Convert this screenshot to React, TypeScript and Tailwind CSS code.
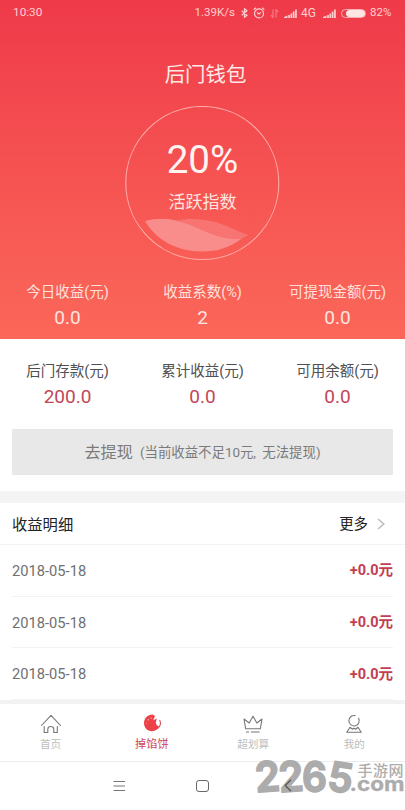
import React from "react";

type Stat = { label: string; value: string };

const earnings: Stat[] = [
  { label: "今日收益(元)", value: "0.0" },
  { label: "收益系数(%)", value: "2" },
  { label: "可提现金额(元)", value: "0.0" },
];
const balances: Stat[] = [
  { label: "后门存款(元)", value: "200.0" },
  { label: "累计收益(元)", value: "0.0" },
  { label: "可用余额(元)", value: "0.0" },
];
const records = [
  { date: "2018-05-18", amount: "+0.0元" },
  { date: "2018-05-18", amount: "+0.0元" },
  { date: "2018-05-18", amount: "+0.0元" },
];

function Signal() {
  return (
    <svg width="13" height="9" viewBox="0 0 13 9" fill="#ffd0d0">
      <path d="M0 9V8L3.5 6.5V9zM4.2 9V6h1.7v3zM6.5 9V4.5h1.7V9zM8.8 9V2.5h1.7V9zM11.1 9V.5h1.7V9z" />
    </svg>
  );
}

function StatusBar() {
  return (
    <div className="flex h-[26px] items-center pl-[13px] pr-[13px] text-[12px] text-[#ffd0d0]">
      <span className="text-[11.8px]">10:30</span>
      <span className="ml-auto w-[45px] text-[11.5px]">1.39K/s</span>
      <svg className="ml-px" width="7" height="10" viewBox="0 0 7 10" fill="none" stroke="#ffd0d0" strokeWidth="1.2">
        <path d="M.7 2.7 6 7.2 3.5 9.3V.7L6 2.8.7 7.3" />
      </svg>
      <svg className="ml-[5.5px]" width="12" height="12" viewBox="0 0 12 12" fill="none" stroke="#ffd0d0" strokeWidth="1.2">
        <circle cx="6" cy="6.4" r="4.5" />
        <path d="M4 5.5 6 7l2-1.6M.7 2.6 2.8.8M11.3 2.6 9.2.8" />
      </svg>
      <svg className="ml-[5px]" width="9" height="9" viewBox="0 0 9 9" fill="none" stroke="#f98088" strokeWidth="1.1">
        <path d="M3 .5v8L.8 6M6 8.5v-8L8.2 3" />
      </svg>
      <span className="ml-[5px]"><Signal /></span>
      <span className="ml-[4px] w-[17px]">4G</span>
      <span className="ml-[5px]"><Signal /></span>
      <span className="ml-[5px] flex h-[9px] w-[25px] justify-end rounded-full border border-[#ffb0b2]">
        <span className="h-full w-[19px] rounded-full bg-[#ffe5e3]" />
      </span>
      <span className="ml-[4px] w-[22px] whitespace-nowrap text-[11.5px]">82%</span>
    </div>
  );
}

function StatRow({ items, light }: { items: Stat[]; light?: boolean }) {
  return (
    <div className="grid grid-cols-3 text-center">
      {items.map((s) => (
        <div key={s.label} className="flex flex-col">
          <span className={`h-[22px] whitespace-nowrap text-[14.5px] leading-[22px] ${light ? "text-[#ffe0dc]" : "text-[#505050]"}`}>{s.label}</span>
          <span className={`mt-[2px] h-[24px] text-[19px] leading-[24px] ${light ? "text-[#ffe5e1]" : "text-[#c34658]"}`}>{s.value}</span>
        </div>
      ))}
    </div>
  );
}

function Gauge() {
  return (
    <div className="relative mx-auto mt-[17px] h-[155px] w-[155px]">
      <svg className="absolute inset-0" width="155" height="155" viewBox="0 0 155 155">
        <circle cx="77.3" cy="77" r="76.5" fill="none" stroke="#ffaaa6" strokeWidth="1.1" />
        <path d="M20 115C36 111 49 113 63 118C77 123 92 132 110 132.5L117 132.5C104 142 92 145.5 77 145.5C52 145.5 31 134 20 115Z" fill="#f88d8b" />
        <path d="M51 115C70 110 91 115 104 121C111 124 117 127 123.5 129L117 132.5C98 135 83 126 70 121C63 118 57 115.5 51 115Z" fill="#f87472" />
      </svg>
      <div className="relative flex flex-col items-center pt-[31px]">
        <span className="h-[46px] text-[38.6px] leading-[46px] text-[#fff4f1]">20%</span>
        <span className="mt-[7px] h-[24px] text-[17px] leading-[24px] text-[#ffe5e1]">活跃指数</span>
      </div>
    </div>
  );
}

const tabIcons: Record<string, React.ReactNode> = {
  首页: (
    <svg width="22" height="20" viewBox="0 0 22 20" fill="none" stroke="#777" strokeWidth="1.1" strokeLinecap="round" strokeLinejoin="round">
      <path d="M1.5 11.5 11 1.3l9.5 10.2M4.2 12.5v6h3.6v-3.3c0-3.7 6-3.7 6 0v3.3h3.5v-6" />
    </svg>
  ),
  掉馅饼: (
    <svg width="22" height="20" viewBox="0 0 22 20" fill="none">
      <path d="M11.5.6 14 2 12.2 6.2 15.8 4.4 14.8 8.6C15 10.5 16 11.8 18 12.6C17 15.7 14.2 17.2 11 17.2C6.4 17.2 3 13.6 3 9.2C3 4.4 6.8.5 11.5.6Z" fill="#ed4149" />
      <path d="M18.8 6.2c1.2 3 .3 6.2-2.1 8.2" stroke="#d84c55" strokeWidth="1.1" strokeLinecap="round" />
      <circle cx="7.2" cy="5.8" r=".8" fill="#ffb4ac" />
      <circle cx="10" cy="4.2" r=".6" fill="#ffb4ac" />
      <circle cx="5.6" cy="9" r=".6" fill="#ff978f" />
    </svg>
  ),
  超划算: (
    <svg width="22" height="20" viewBox="0 0 22 20" fill="none" stroke="#777" strokeWidth="1.1" strokeLinejoin="round">
      <path d="M3.7 14.8 2 5l5.2 4L11 2.2 14.8 9 20 5l-1.7 9.8zM4 18h3m1.8 0H17.5" />
    </svg>
  ),
  我的: (
    <svg width="22" height="20" viewBox="0 0 22 20" fill="none" stroke="#777" strokeWidth="1.1" strokeLinecap="round" strokeLinejoin="round">
      <path d="M15.6 4.2A5.2 5.2 0 1 1 12 1.6M7 13.3 3.8 18.3h14.4L15 13.3M7 13.3l2.5 2 1.5-1.2 1.5 1.2 2.5-2" />
    </svg>
  ),
};

function TabBar() {
  return (
    <nav className="grid h-[58px] grid-cols-4 border-b border-[#ededed] bg-white">
      {Object.entries(tabIcons).map(([name, icon]) => (
        <div key={name} className="flex flex-col items-center pt-[10px]">
          {icon}
          <span className={`mt-[3px] h-[16px] leading-[16px] ${name === "掉馅饼" ? "text-[11.2px] text-[#cb4656]" : "text-[10.6px] text-[#bdbdbd]"}`}>{name}</span>
        </div>
      ))}
    </nav>
  );
}

function Watermark() {
  return (
    <svg className="absolute left-[250px] top-[750px]" width="155" height="55" viewBox="0 0 155 55" fill="#acacac">
      <g fontFamily="Inter, sans-serif" fontWeight="700" stroke="#acacac" strokeLinejoin="round">
        <text transform="translate(6 42.5) rotate(-4)" fontSize="42" strokeWidth="1.3" textLength="25" lengthAdjust="spacingAndGlyphs">2</text>
        <text transform="translate(29.5 42.5) rotate(-4)" fontSize="42" strokeWidth="1.3" textLength="25" lengthAdjust="spacingAndGlyphs">2</text>
        <text transform="translate(52 42)" fontSize="42" strokeWidth="1.3" textLength="25" lengthAdjust="spacingAndGlyphs">6</text>
        <text transform="translate(76 40) rotate(9)" fontSize="41" strokeWidth="1.3" textLength="25" lengthAdjust="spacingAndGlyphs">5</text>
        <text x="99.5" y="41.3" fontSize="20" strokeWidth=".3" textLength="55" lengthAdjust="spacingAndGlyphs">.com</text>
      </g>
      <text x="107.5" y="26.2" fontFamily="'Noto Sans CJK SC', sans-serif" fontWeight="500" fontSize="15" textLength="46">手游网</text>
    </svg>
  );
}

export default function App() {
  return (
    <div className="relative flex h-[810px] w-[405px] flex-col overflow-hidden bg-white font-[Roboto,'Noto_Sans_CJK_SC',sans-serif]">
      <header className="h-[339px] bg-linear-to-b from-[#ef394a] to-[#fb6759]">
        <StatusBar />
        <h1 className="mt-[35px] h-[28px] pl-[6px] text-center text-[20.4px] leading-[28px] text-[#ffe9e6]">后门钱包</h1>
        <Gauge />
        <div className="mt-[21px]"><StatRow items={earnings} light /></div>
      </header>
      <section className="h-[152px] pt-[22px]">
        <StatRow items={balances} />
        <button className="mx-[12px] mt-[20px] flex h-[46px] w-[381px] items-center justify-center gap-[7px] bg-[#e8e8e8] pt-[2px] text-[#7b7b7b]">
          <span className="text-[16.2px]">去提现</span>
          <span className="whitespace-nowrap text-[13.4px]">(当前收益不足10元<span className="inline-block w-[9px] text-left">,</span>无法提现)</span>
        </button>
      </section>
      <div className="h-[12px] bg-[#f4f4f4]" />
      <section>
        <div className="flex h-[42px] items-center border-b border-[#f2f2f2] pl-[12px] pr-[20px] text-[15.3px] text-[#222]">
          <span className="pt-[3px]">收益明细</span>
          <span className="ml-auto pt-[3px] text-[14.4px]">更多</span>
          <svg className="ml-[9px]" width="8" height="12" viewBox="0 0 8 12" fill="none" stroke="#bcbcbc" strokeWidth="1.6">
            <path d="m1 1 5.8 5L1 11" />
          </svg>
        </div>
        <ul className="px-[12px]">
          {records.map((r, i) => (
            <li key={i} className="flex h-[51.6px] items-center justify-between border-b border-[#f2f2f2] pt-[2px] text-[14.7px] text-[#6f6f6f]">
              <span>{r.date}</span>
              <span className="text-[14.5px] font-bold text-[#c23e51]">{r.amount}</span>
            </li>
          ))}
        </ul>
      </section>
      <div className="h-[4px] bg-[#f2f2f2]" />
      <TabBar />
      <div className="flex h-[48px] items-center pl-[113px]">
        <svg width="13" height="12" viewBox="0 0 13 12" stroke="#777" strokeWidth="1.1">
          <path d="M.5 1.5h11.5M.5 6h11.5M.5 10.5h11.5" />
        </svg>
        <span className="ml-[70px] h-[12px] w-[13px] rounded-[3px] border border-[#666]" />
      </div>
      <Watermark />
      <svg className="absolute left-[284px] top-[779px]" width="8" height="13" viewBox="0 0 8 13" fill="none" stroke="#555" strokeWidth="1.2">
        <path d="M7 .8 1.2 6.5 7 12.2" />
      </svg>
    </div>
  );
}
